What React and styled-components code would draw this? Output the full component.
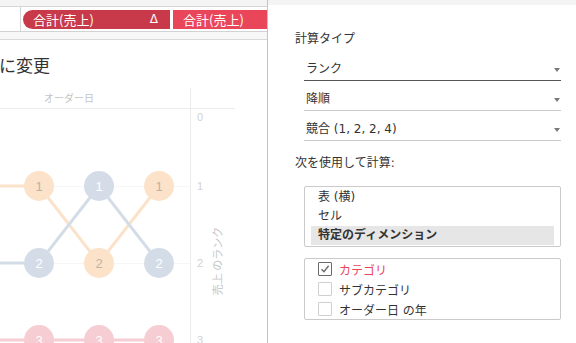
import React from "react";
import styled, { createGlobalStyle } from "styled-components";

const Global = createGlobalStyle`
  html, body { margin: 0; padding: 0; background: #fff; }
  body { font-family: "Noto Sans CJK JP", "Noto Sans", sans-serif; color: #333; }
`;

const Page = styled.div`
  display: flex;
  width: 576px;
  height: 343px;
  overflow: hidden;
  background: #fff;
`;

const LeftPane = styled.div`
  width: 267px;
  flex: none;
  border-right: 1px solid #c4c4c4;
  display: flex;
  flex-direction: column;
  overflow: hidden;
`;

const TopStrip = styled.div`
  height: ${(p) => p.$h}px;
  flex: none;
  background: #f4f4f4;
  border-bottom: ${(p) => (p.$line ? "1px solid #d6d6d6" : "none")};
`;

const ShelfRow = styled.div`
  display: flex;
  height: 24px;
  flex: none;
  border-bottom: 1px solid #d2d2d2;
`;

const ShelfLabel = styled.div`
  width: 20px;
  border-right: 1px solid #d6d6d6;
  flex: none;
`;

const Pills = styled.div`
  display: flex;
  gap: 3px;
  padding: 3px 0 0 2px;
  flex: 1;
`;

const Pill = styled.div`
  height: 19px;
  display: flex;
  align-items: center;
  justify-content: space-between;
  padding: 0 12px 0 10px;
  box-sizing: border-box;
  color: #fff;
  font-size: 13px;
  line-height: 19px;
  background: ${(p) => (p.$primary ? "#c83a4a" : "#ea4659")};
  border-radius: ${(p) => (p.$primary ? "10px 0 0 10px" : "0")};
  width: ${(p) => (p.$w ? `${p.$w}px` : "auto")};
  flex: ${(p) => (p.$w ? "none" : "1")};
`;

const Delta = styled.span`
  font-size: 12px;
  font-family: "DejaVu Sans", sans-serif;
`;

const Band = styled.div`
  height: 7px;
  flex: none;
  background: #f7f7f7;
  border-bottom: 1px solid #d8d8d8;
`;

const Heading = styled.div`
  font-size: 17px;
  line-height: 24px;
  height: 24px;
  padding: 13px 0 3px 0;
  margin-left: -1px;
  color: #333;
  white-space: nowrap;
  flex: none;
`;

const ChartSvg = styled.svg`
  display: block;
  flex: none;
`;

const RightPane = styled.div`
  flex: 1;
  display: flex;
  flex-direction: column;
`;

const Form = styled.div`
  padding: 26px 15px 0 27px;
  display: flex;
  flex-direction: column;
  font-size: 12px;
  font-family: "DejaVu Sans", "Noto Sans CJK JP", sans-serif;
`;

const Label = styled.div`
  line-height: 16px;
  height: 16px;
  color: #333;
  margin-top: ${(p) => p.$mt || 0}px;
`;

const Dropdown = styled.div`
  margin: ${(p) => p.$mt}px 0 0 9px;
  height: 21px;
  box-sizing: border-box;
  border-bottom: 1px solid ${(p) => (p.$active ? "#555" : "#cacaca")};
  display: flex;
  justify-content: space-between;
  align-items: flex-start;
  line-height: 18px;
  padding-left: 2px;
  padding-right: 1px;
`;

const Arrow = styled.span`
  width: 0;
  height: 0;
  margin-top: 8px;
  border-left: 3.5px solid transparent;
  border-right: 3.5px solid transparent;
  border-top: 4px solid #7a7a7a;
`;

const ListBox = styled.div`
  margin: ${(p) => p.$mt}px 0 0 9px;
  border: 1px solid #cacaca;
  border-radius: 2px;
  padding: ${(p) => p.$pad};
  display: flex;
  flex-direction: column;
`;

const ListItem = styled.div`
  height: 19px;
  line-height: 19px;
  padding-left: 7px;
  font-weight: ${(p) => (p.$selected ? 700 : 400)};
  background: ${(p) => (p.$selected ? "#e6e6e6" : "transparent")};
  color: #333;
`;

const CheckRow = styled.div`
  height: 20px;
  display: flex;
  align-items: center;
  gap: 7px;
  padding-left: 13px;
  color: ${(p) => (p.$checked ? "#e8475a" : "#333")};
`;

const Box = styled.span`
  width: 14px;
  height: 14px;
  box-sizing: border-box;
  border: 1px solid ${(p) => (p.$checked ? "#6a6a6a" : "#cfcfcf")};
  border-radius: 1px;
  display: flex;
  align-items: center;
  justify-content: center;
  background: #fff;
`;

const orange = "#fbe2c9";
const blue = "#d4dde7";
const pink = "#f6cdd2";

const Chart = () => {
  const xs = [39, 99, 159];
  const rows = [106, 183, 260];
  const nodes = [
    { x: 39, y: 106, c: orange, t: "1", tc: "#bdb3a8" },
    { x: 99, y: 106, c: blue, t: "1", tc: "#fff" },
    { x: 159, y: 106, c: orange, t: "1", tc: "#bdb3a8" },
    { x: 39, y: 183, c: blue, t: "2", tc: "#fff" },
    { x: 99, y: 183, c: orange, t: "2", tc: "#bdb3a8" },
    { x: 159, y: 183, c: blue, t: "2", tc: "#fff" },
    { x: 39, y: 260, c: pink, t: "3", tc: "#fff" },
    { x: 99, y: 260, c: pink, t: "3", tc: "#fff" },
    { x: 159, y: 260, c: pink, t: "3", tc: "#fff" },
  ];
  return (
    <ChartSvg width="267" height="263" viewBox="0 0 267 263">
      <text x="69" y="22" fontSize="10" fill="#c4c4c4" textAnchor="middle" fontFamily="Noto Sans CJK JP, sans-serif">
        オーダー日
      </text>
      <line x1="0" y1="28.5" x2="235" y2="28.5" stroke="#ececec" />
      <line x1="190.5" y1="8" x2="190.5" y2="263" stroke="#ececec" />
      {rows.slice(0, 2).map((y) => (
        <line key={y} x1="0" y1={y + 0.5} x2="190" y2={y + 0.5} stroke="#f6f6f6" />
      ))}
      <g fontSize="11" fill="#d2d2d2" fontFamily="Liberation Sans, sans-serif">
        <text x="197" y="41">0</text>
        <text x="197" y="110">1</text>
        <text x="197" y="187">2</text>
        <text x="197" y="264">3</text>
      </g>
      <text
        transform="translate(222 181) rotate(-90)"
        fontSize="11"
        fill="#c8c8c8"
        textAnchor="middle"
        fontFamily="Noto Sans CJK JP, sans-serif"
      >
        売上 のランク
      </text>
      <polyline points="0,106 39,106 99,183 159,106" fill="none" stroke={orange} strokeWidth="3" />
      <polyline points="0,183 39,183 99,106 159,183" fill="none" stroke={blue} strokeWidth="3" />
      <polyline points={`0,260 ${xs.map((x) => `${x},260`).join(" ")}`} fill="none" stroke={pink} strokeWidth="3" />
      {nodes.map((n, i) => (
        <g key={i}>
          <circle cx={n.x} cy={n.y} r="15" fill={n.c} />
          <text
            x={n.x}
            y={n.y + 4.5}
            textAnchor="middle"
            fontSize="13"
            fill={n.tc}
            fontFamily="Liberation Sans, sans-serif"
          >
            {n.t}
          </text>
        </g>
      ))}
    </ChartSvg>
  );
};

const Check = () => (
  <svg width="10" height="10" viewBox="0 0 10 10">
    <polyline points="1.5,5.2 4,7.8 8.6,1.8" fill="none" stroke="#6a6a6a" strokeWidth="1.4" />
  </svg>
);

export default function App() {
  return (
    <>
      <Global />
      <Page>
        <LeftPane>
          <TopStrip $h={6} $line />
          <ShelfRow>
            <ShelfLabel />
            <Pills>
              <Pill $primary $w={147}>
                <span>合計(売上)</span>
                <Delta>Δ</Delta>
              </Pill>
              <Pill>
                <span>合計(売上)</span>
              </Pill>
            </Pills>
          </ShelfRow>
          <Band />
          <Heading>に変更</Heading>
          <Chart />
        </LeftPane>
        <RightPane>
          <TopStrip $h={5} />
          <Form>
            <Label>計算タイプ</Label>
            <Dropdown $mt={13} $active>
              <span>ランク</span>
              <Arrow />
            </Dropdown>
            <Dropdown $mt={9}>
              <span>降順</span>
              <Arrow />
            </Dropdown>
            <Dropdown $mt={9}>
              <span>競合 (1, 2, 2, 4)</span>
              <Arrow />
            </Dropdown>
            <Label $mt={14}>次を使用して計算:</Label>
            <ListBox $mt={15} $pad="1px 6px 1px 6px">
              <ListItem>表 (横)</ListItem>
              <ListItem>セル</ListItem>
              <ListItem $selected>特定のディメンション</ListItem>
            </ListBox>
            <ListBox $mt={11} $pad="0">
              <CheckRow $checked>
                <Box $checked>
                  <Check />
                </Box>
                <span>カテゴリ</span>
              </CheckRow>
              <CheckRow>
                <Box />
                <span>サブカテゴリ</span>
              </CheckRow>
              <CheckRow>
                <Box />
                <span>オーダー日 の年</span>
              </CheckRow>
            </ListBox>
          </Form>
        </RightPane>
      </Page>
    </>
  );
}
